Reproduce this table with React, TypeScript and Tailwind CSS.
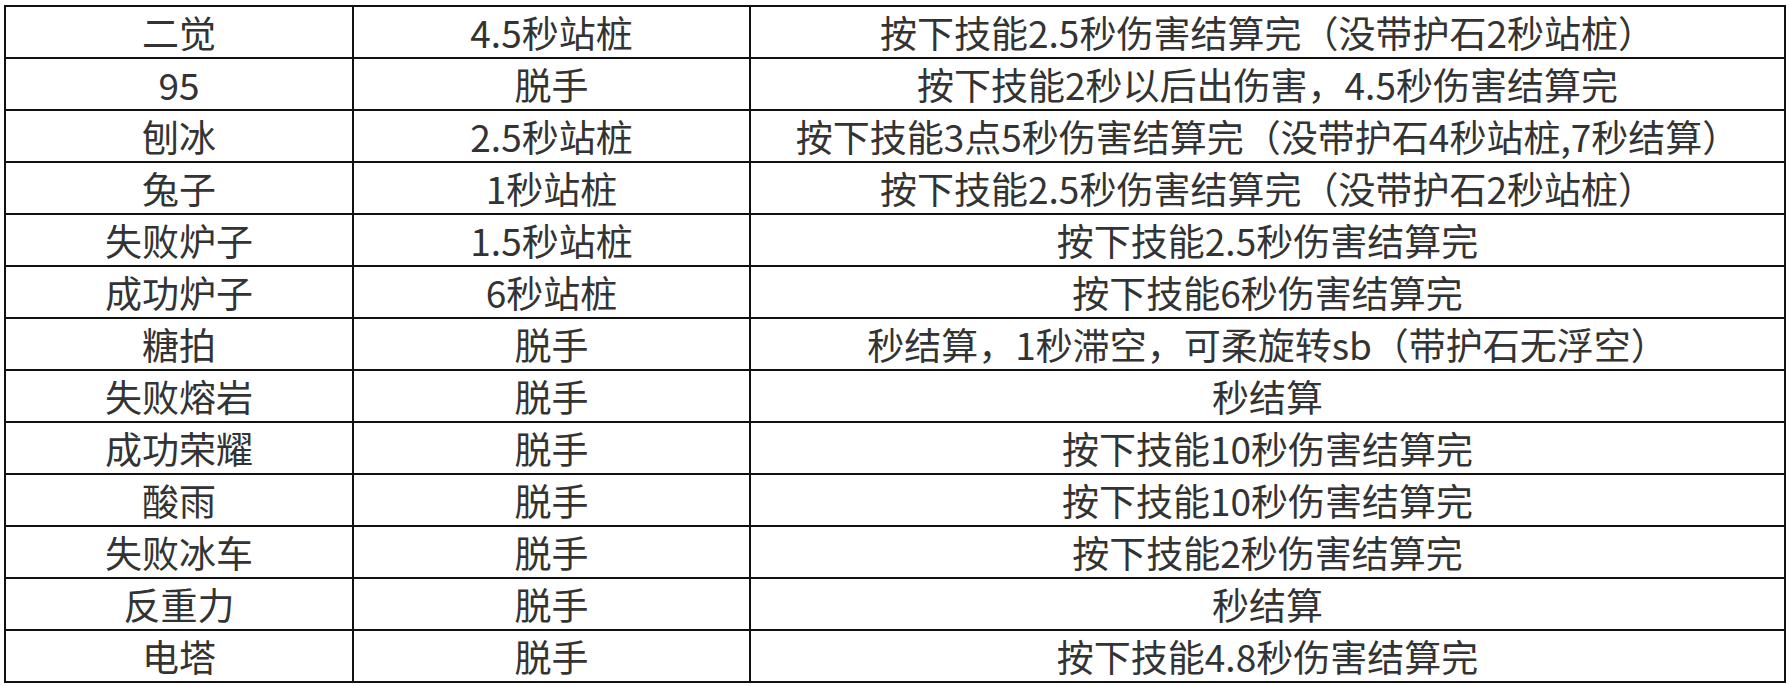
const rows: [string, string, string][] = [
  ["二觉", "4.5秒站桩", "按下技能2.5秒伤害结算完（没带护石2秒站桩）"],
  ["95", "脱手", "按下技能2秒以后出伤害，4.5秒伤害结算完"],
  ["刨冰", "2.5秒站桩", "按下技能3点5秒伤害结算完（没带护石4秒站桩,7秒结算）"],
  ["兔子", "1秒站桩", "按下技能2.5秒伤害结算完（没带护石2秒站桩）"],
  ["失败炉子", "1.5秒站桩", "按下技能2.5秒伤害结算完"],
  ["成功炉子", "6秒站桩", "按下技能6秒伤害结算完"],
  ["糖拍", "脱手", "秒结算，1秒滞空，可柔旋转sb（带护石无浮空）"],
  ["失败熔岩", "脱手", "秒结算"],
  ["成功荣耀", "脱手", "按下技能10秒伤害结算完"],
  ["酸雨", "脱手", "按下技能10秒伤害结算完"],
  ["失败冰车", "脱手", "按下技能2秒伤害结算完"],
  ["反重力", "脱手", "秒结算"],
  ["电塔", "脱手", "按下技能4.8秒伤害结算完"],
];

export default function App() {
  return (
    <div className="h-[686px] w-[1790px] bg-white pl-[4px] pt-[5px] font-['Noto_Sans_CJK_SC',sans-serif] text-[#333]">
      <table className="w-[1782px] table-fixed border-collapse">
        <colgroup>
          <col className="w-[348px]" />
          <col className="w-[397px]" />
          <col />
        </colgroup>
        <tbody>
          {rows.map((row) => (
            <tr key={row[0]} className="h-[52px]">
              {row.map((cell, i) => (
                <td
                  key={i}
                  className="border-2 border-[#111] p-0 text-center align-middle text-[37px] leading-none"
                >
                  {cell}
                </td>
              ))}
            </tr>
          ))}
        </tbody>
      </table>
    </div>
  );
}
